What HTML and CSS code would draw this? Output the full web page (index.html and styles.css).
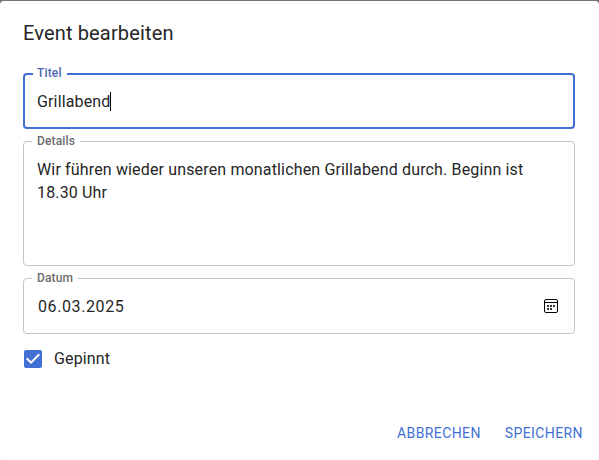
FILE: index.html
```html
<!DOCTYPE html>
<html lang="de">
<head>
<meta charset="UTF-8" />
<meta name="viewport" content="width=device-width, initial-scale=1.0">
<title>Event bearbeiten</title>
<link rel="stylesheet" href="styles.css">
</head>
<body>

<div class="dialog">
  <h2>Event bearbeiten</h2>

  <div class="field focused">
    <span class="label">Titel</span>
    <span class="value">Grillabend</span><span class="caret"></span>
  </div>

  <div class="field multiline">
    <span class="label">Details</span>
    <span class="value">Wir führen wieder unseren monatlichen Grillabend durch. Beginn ist 18.30 Uhr</span>
  </div>

  <div class="field date">
    <span class="label">Datum</span>
    <span class="value">06.03.2025</span>
    <svg class="calendar" width="14" height="14" viewBox="0 0 14 14">
      <rect x="0.5" y="0.5" width="13" height="13" rx="1.5" fill="none" stroke="#000" />
      <path d="M1 3.5h12" stroke="#000" />
      <path d="M3 6h2v2H3zM6 6h2v2H6zM9 6h2v2H9zM3 9h2v2H3zM6 9h2v2H6z" fill="#333" />
    </svg>
  </div>

  <label class="check">
    <svg class="box" width="18" height="18" viewBox="3 3 18 18">
      <path fill="currentColor" d="M19 3H5c-1.11 0-2 .9-2 2v14c0 1.1.89 2 2 2h14c1.11 0 2-.9 2-2V5c0-1.1-.89-2-2-2zm-9 14l-5-5 1.41-1.41L10 14.17l7.59-7.59L19 8l-9 9z" />
    </svg>
    <span>Gepinnt</span>
  </label>

  <div class="actions">
    <button>Abbrechen</button>
    <button>Speichern</button>
  </div>
</div>

</body>
</html>
```

FILE: styles.css
```css
* { box-sizing:border-box; }
body {
  margin:0; padding-top:1px; height:460px; overflow:hidden;
  background:#757575; color:#262626;
  font-family:Roboto, "Liberation Sans", sans-serif; font-size:16px;
  letter-spacing:0.15px;
}

.dialog {
  height:461px; padding:16px 24px 0 23px;
  background:#fff; border-radius:4px;
}
h2 {
  margin:0 0 24px; font-size:20px; font-weight:400; line-height:32px;
}

/* Eingabefelder */
.field {
  position:relative; display:flex; align-items:center;
  height:56px; margin-bottom:12px; padding:0 13px;
  border:1px solid #c4c4c4; border-radius:4px;
}
.field.focused { padding:0 12px; border:2px solid #416fd3; }
.field.multiline {
  align-items:flex-start; height:125px; padding-top:16px; line-height:23px;
}
.label {
  position:absolute; top:-9px; left:8px; padding:0 5px;
  background:#fff; color:#6b6b6b;
  font-size:12px; font-weight:500; line-height:16px;
}
.focused .label { left:8px; top:-10px; padding:0 5px 0 4px; color:#4a69ad; }
.caret { width:1px; height:19px; margin-left:-1px; background:#000; }
.date .value { margin-left:1px; letter-spacing:0.6px; }
.calendar { margin-left:auto; margin-right:3px; }

/* Checkbox */
.check {
  display:flex; align-items:center; gap:12px;
  height:24px; margin-top:13px; padding-left:1px;
}
.check span { padding-bottom:2px; }
.box { color:#416fd3; }

.actions {
  display:flex; justify-content:flex-end; gap:24px;
  margin-top:50px; margin-right:-8px;
}
button {
  padding:0; border:none; background:none; color:#416fd3;
  font-family:inherit; font-size:14px; line-height:24px;
  letter-spacing:0.4px; text-transform:uppercase; cursor:pointer;
}
```
